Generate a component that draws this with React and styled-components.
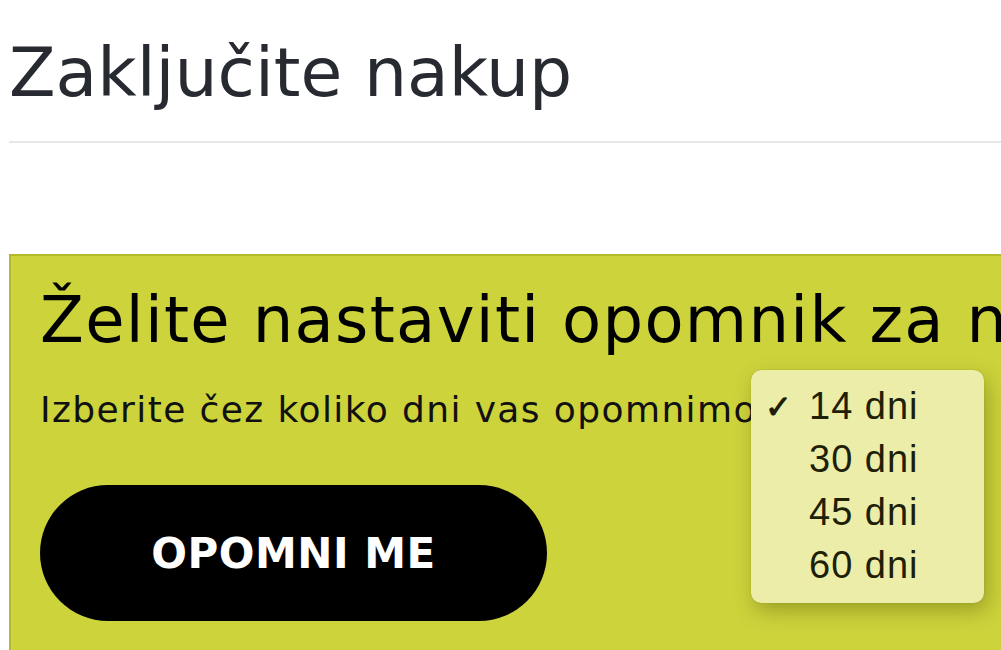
import styled, { createGlobalStyle } from "styled-components";

const GlobalStyle = createGlobalStyle`
  html, body {
    margin: 0;
    background: #ffffff;
    overflow: hidden;
  }
  body {
    font-family: "DejaVu Sans", "Liberation Sans", sans-serif;
  }
`;

const OPTIONS = ["14 dni", "30 dni", "45 dni", "60 dni"];

export default function App() {
  return (
    <Page>
      <GlobalStyle />
      <Title>Zaključite nakup</Title>
      <Divider />
      <ReminderBox>
        <BoxTitle>Želite nastaviti opomnik za naslednji nakup?</BoxTitle>
        <Subtitle>Izberite čez koliko dni vas opomnimo</Subtitle>
        <RemindButton>OPOMNI ME</RemindButton>
        <Menu>
          {OPTIONS.map((o, i) => (
            <MenuItem key={o}>
              <Check>{i === 0 ? "✓" : ""}</Check>
              {o}
            </MenuItem>
          ))}
        </Menu>
      </ReminderBox>
    </Page>
  );
}

const Page = styled.div`
  width: 1001px;
  height: 650px;
  padding-left: 9px;
  box-sizing: border-box;
  overflow: hidden;
`;

const Title = styled.h1`
  margin: 0;
  padding-top: 33px;
  font-family: "DejaVu Sans", sans-serif;
  font-weight: 400;
  font-size: 68px;
  line-height: 80px;
  color: #272a30;
  white-space: nowrap;
`;

const Divider = styled.div`
  height: 2px;
  background: #e7e7e7;
  margin-top: 28px;
  width: 1100px;
`;

const ReminderBox = styled.div`
  position: relative;
  margin-top: 111px;
  width: 1200px;
  height: 420px;
  box-sizing: border-box;
  border: 2px solid #b4ba2c;
  background: #cdd33b;
  padding: 24px 0 0 29px;
`;

const BoxTitle = styled.h2`
  margin: 0;
  font-family: "DejaVu Sans", sans-serif;
  font-weight: 400;
  font-size: 64px;
  line-height: 80px;
  letter-spacing: 1.3px;
  color: #000;
  white-space: nowrap;
`;

const Subtitle = styled.p`
  margin: 28px 0 0;
  font-family: "DejaVu Sans", sans-serif;
  font-size: 36px;
  line-height: 44px;
  letter-spacing: 1.4px;
  color: #111;
  white-space: nowrap;
`;

const RemindButton = styled.button`
  display: flex;
  align-items: center;
  justify-content: center;
  margin-top: 53px;
  width: 507px;
  height: 136px;
  border: none;
  border-radius: 68px;
  background: #000;
  color: #fff;
  font-family: "DejaVu Sans", sans-serif;
  font-weight: 700;
  font-size: 42px;
  letter-spacing: 0.5px;
  cursor: pointer;
`;

const Menu = styled.ul`
  position: absolute;
  left: 740px;
  top: 114px;
  width: 233px;
  height: 233px;
  margin: 0;
  padding: 10px 0 0;
  box-sizing: border-box;
  list-style: none;
  background: #ebeda9;
  border-radius: 10px;
  box-shadow: 0 0 1px rgba(80, 80, 0, 0.5), 4px 8px 20px rgba(70, 70, 0, 0.35);
`;

const MenuItem = styled.li`
  display: flex;
  align-items: center;
  height: 53px;
  font-family: "Liberation Sans", Arial, sans-serif;
  font-size: 38px;
  letter-spacing: 1px;
  color: #1f1f08;
`;

const Check = styled.span`
  width: 58px;
  padding-left: 14px;
  box-sizing: border-box;
  font-size: 32px;
  font-weight: 700;
  letter-spacing: 0;
`;
